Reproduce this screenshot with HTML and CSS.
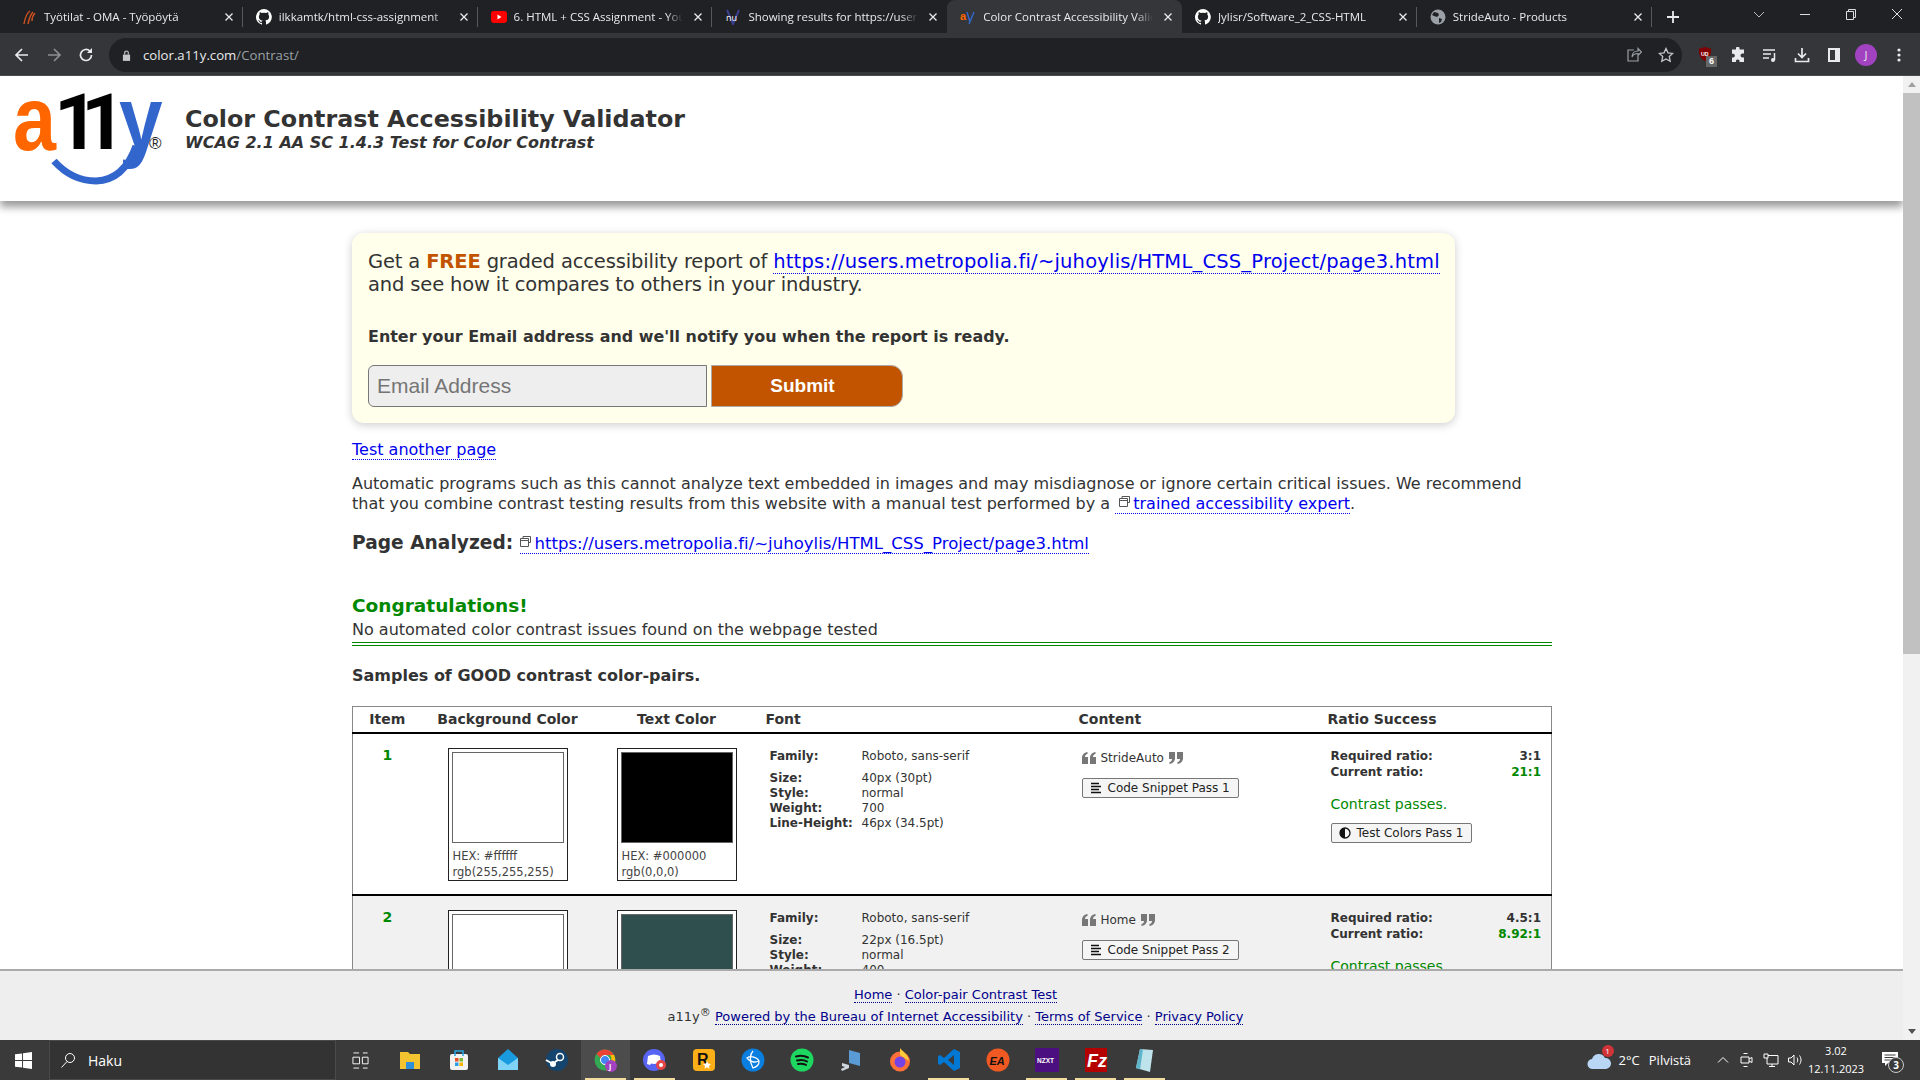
FILE: index.html
```html
<!DOCTYPE html>
<html lang="en">
<head>
    <meta charset="UTF-8">
    <title>Color Contrast Accessibility Validator</title>
    <link rel="stylesheet" href="styles.css">
</head>
<body>
    <svg class="defs" width="0" height="0">
        <symbol id="github" viewBox="0 0 16 16"><path fill="#fff" d="M8 0a8 8 0 0 0-2.5 15.6c.4.1.5-.2.5-.4v-1.4c-2.2.5-2.7-1-2.7-1-.4-.9-.9-1.200-.9-1.200-.7-.5.1-.5.1-.5.8.1 1.200.8 1.200.8.7 1.200 1.900.9 2.300.7.1-.5.300-.9.500-1.100-1.800-.2-3.600-.9-3.600-4 0-.9.300-1.600.8-2.100-.1-.2-.4-1 .1-2.100 0 0 .7-.2 2.200.8a7.600 7.600 0 0 1 4 0c1.500-1 2.200-.8 2.200-.8.4 1.100.2 1.900.1 2.100.5.6.8 1.300.8 2.100 0 3.100-1.900 3.700-3.700 3.900.3.3.6.800.6 1.500v2.200c0 .2.100.5.600.4A8 8 0 0 0 8 0z"/></symbol>
        <symbol id="tab-x" viewBox="0 0 10 10"><path stroke="#e8eaed" stroke-width="1.300" d="M1.500 1.500l7 7M8.500 1.500l-7 7"/></symbol>
        <symbol id="link-box" viewBox="0 0 11 11"><path fill="none" stroke="#555" d="M3 2.500V.5h7.500v6H8.500M.5 2.500h8v8h-8zM.5 4.500h8"/></symbol>
        <symbol id="quote-l" viewBox="0 0 14 12"><path fill="#777" d="M0 6c0-3 2-5.500 5.500-6v2C4 2.300 3 3.300 3 5h3v7H0zM8 6c0-3 2-5.500 5.500-6v2C12 2.300 11 3.300 11 5h3v7H8z"/></symbol>
        <symbol id="quote-r" viewBox="0 0 14 12"><path fill="#777" d="M6 6c0 3-2 5.500-5.500 6v-2C2 9.700 3 8.700 3 7H0V0h6zM14 6c0 3-2 5.500-5.500 6v-2C10 9.700 11 8.700 11 7H8V0h6z"/></symbol>
        <symbol id="lines" viewBox="0 0 12 12"><path stroke="#111" stroke-width="1.500" d="M1 1.500h8M1 4.500h10M1 7.500h8M1 10.500h10"/></symbol>
    </svg>

    <div class="screen">
        <div class="tabstrip">
            <div class="tab">
                <svg class="favicon" viewBox="0 0 16 16"><path fill="none" stroke="#c8501e" stroke-width="1.500" d="M3 15C4 9 6 4 9 2M7 15c1-5 2-9 5-12M11 12c0-3 1-6 3-8"/></svg>
                <span class="tab-title">Työtilat - OMA - Työpöytä</span>
                <svg class="tab-close"><use href="#tab-x"/></svg>
            </div>
            <div class="tab">
                <svg class="favicon"><use href="#github"/></svg>
                <span class="tab-title">ilkkamtk/html-css-assignment</span>
                <svg class="tab-close"><use href="#tab-x"/></svg>
            </div>
            <div class="tab">
                <svg class="favicon" viewBox="0 0 16 16"><rect y="2" width="16" height="12" rx="3" fill="#f00"/><path fill="#fff" d="M6.500 5.500l4 2.500-4 2.500z"/></svg>
                <span class="tab-title">6. HTML + CSS Assignment - YouTube</span>
                <svg class="tab-close"><use href="#tab-x"/></svg>
            </div>
            <div class="tab tab-last-plain">
                <svg class="favicon" viewBox="0 0 16 16"><path fill="none" stroke="#3b3f8f" stroke-width="2" d="M2 1l6 14 6-14"/><text x="1" y="12" class="nu-text">nu</text></svg>
                <span class="tab-title">Showing results for https://users.metropolia</span>
                <svg class="tab-close"><use href="#tab-x"/></svg>
            </div>
            <div class="tab tab-active">
                <svg class="favicon" viewBox="0 0 16 16"><text x="0" y="11" class="fav-a">a</text><path fill="none" stroke="#36c" stroke-width="1.500" d="M7 3l3 10M14 3l-5 12"/></svg>
                <span class="tab-title">Color Contrast Accessibility Validator</span>
                <svg class="tab-close"><use href="#tab-x"/></svg>
            </div>
            <div class="tab">
                <svg class="favicon"><use href="#github"/></svg>
                <span class="tab-title">Jylisr/Software_2_CSS-HTML</span>
                <svg class="tab-close"><use href="#tab-x"/></svg>
            </div>
            <div class="tab">
                <svg class="favicon" viewBox="0 0 16 16"><circle cx="8" cy="8" r="7.500" fill="#9aa0a6"/><path fill="#202124" d="M4 3l4 1 1 2-2 2-3-1-2-1zM9 9l3 1-1 3-2 1z"/></svg>
                <span class="tab-title">StrideAuto - Products</span>
                <svg class="tab-close"><use href="#tab-x"/></svg>
            </div>
            <svg class="new-tab" viewBox="0 0 12 12"><path stroke="#e8eaed" stroke-width="1.800" d="M6 0v12M0 6h12"/></svg>
            <div class="window-controls">
                <svg viewBox="0 0 12 12"><path fill="none" stroke="#bbb" d="M1 4l5 5 5-5"/></svg>
                <svg viewBox="0 0 12 12"><path stroke="#ddd" d="M1 6.500h10"/></svg>
                <svg viewBox="0 0 12 12"><path fill="none" stroke="#ddd" d="M1.500 3.500h7v8h-7zM3.500 3.500v-2h7v8h-2"/></svg>
                <svg viewBox="0 0 12 12"><path stroke="#ddd" d="M1 1l10 10M11 1L1 11"/></svg>
            </div>
        </div>

        <div class="toolbar">
            <svg class="tool-icon" viewBox="0 0 16 16"><path fill="none" stroke="#e8eaed" stroke-width="1.700" d="M14 8H2.500M8 2L2 8l6 6"/></svg>
            <svg class="tool-icon" viewBox="0 0 16 16"><path fill="none" stroke="#8b8e92" stroke-width="1.700" d="M2 8h11.500M8 2l6 6-6 6"/></svg>
            <svg class="tool-icon" viewBox="0 0 16 16"><path fill="none" stroke="#e8eaed" stroke-width="1.700" d="M13.500 8a5.500 5.500 0 1 1-1.600-3.900"/><path fill="#e8eaed" d="M14 1v5H9z"/></svg>
            <div class="omnibox">
                <svg class="lock" viewBox="0 0 10 12"><path fill="#c4c7c9" d="M1 5h8v7H1z"/><path fill="none" stroke="#c4c7c9" stroke-width="1.300" d="M3 5V3a2 2 0 0 1 4 0v2"/></svg>
                <span class="url">color.a11y.com<span class="url-path">/Contrast/</span></span>
                <svg class="omni-icon" viewBox="0 0 16 16"><path fill="none" stroke="#9aa0a6" stroke-width="1.200" d="M8 3H2v11h10V9M6 10c0-4 3-6 6-6V1.500L15.500 5 12 8.500V6.500c-3 0-5 1-6 3.500z"/></svg>
                <svg class="omni-icon" viewBox="0 0 16 16"><path fill="none" stroke="#c4c7c9" stroke-width="1.300" d="M8 1.500l2 4.300 4.700.6-3.400 3.200.9 4.700L8 12l-4.200 2.300.9-4.700L1.300 6.400 6 5.800z"/></svg>
            </div>
            <div class="extensions">
                <span class="ublock">
                    <svg viewBox="0 0 16 16"><path fill="#800000" d="M8 0l7 2c0 6-1 11-7 14C2 13 1 8 1 2z"/><text x="3.500" y="10" class="ub-text">UD</text></svg>
                    <span class="ub-badge">6</span>
                </span>
                <svg class="tool-icon" viewBox="0 0 16 16"><path fill="#e8eaed" d="M6 1a1.800 1.800 0 0 1 3.500 0v1.500H14v4h-1.500a2 2 0 0 0 0 4H14V15H9.500v-1.500a2 2 0 0 0-3.500 0V15H2v-4.500h1.500a2 2 0 0 0 0-3.800H2V2.500h4z"/></svg>
                <svg class="tool-icon" viewBox="0 0 16 16"><path stroke="#e8eaed" stroke-width="1.500" fill="none" d="M1 3h12M1 7h8M1 11h6M12.500 6v7"/><circle cx="11" cy="13" r="2" fill="#e8eaed"/></svg>
                <svg class="tool-icon" viewBox="0 0 16 16"><path stroke="#e8eaed" stroke-width="1.700" fill="none" d="M8 1v9M4 6.500L8 10.500 12 6.500M1.500 11v3.500h13V11"/></svg>
                <svg class="tool-icon" viewBox="0 0 16 16"><path fill="#e8eaed" d="M2 1h12v14H2zM4 3v10h5V3z" fill-rule="evenodd"/></svg>
                <span class="avatar">J</span>
                <svg class="tool-icon" viewBox="0 0 16 16"><g fill="#e8eaed"><circle cx="8" cy="3" r="1.600"/><circle cx="8" cy="8" r="1.600"/><circle cx="8" cy="13" r="1.600"/></g></svg>
            </div>
        </div>

        <div class="viewport">
            <div class="page">
                <div class="page-scroll">
                    <header class="site-header">
                        <svg class="logo" viewBox="0 0 170 124">
                            <text transform="translate(13 74) scale(.86 1)" class="logo-a">a</text>
                            <text x="54" y="73" class="logo-11">1</text>
                            <text x="81" y="73" class="logo-11">1</text>
                            <text transform="translate(119 74) scale(.87 1)" class="logo-y">y</text>
                            <path fill="none" stroke="#36c" stroke-width="7" d="M54 85Q72 105 96 105Q124 104 136 70"/>
                            <text x="149" y="73" class="logo-r">®</text>
                        </svg>
                        <div class="site-titles">
                            <h1>Color Contrast Accessibility Validator</h1>
                            <h2>WCAG 2.1 AA SC 1.4.3 Test for Color Contrast</h2>
                        </div>
                    </header>

                    <main class="content">
                        <section class="report-card">
                            <p class="report-intro">Get a <strong class="free">FREE</strong> graded accessibility report of <a href="#">https://users.metropolia.fi/~juhoylis/HTML_CSS_Project/page3.html</a> and see how it compares to others in your industry.</p>
                            <p class="report-notify">Enter your Email address and we'll notify you when the report is ready.</p>
                            <form class="report-form">
                                <input type="text" class="email" placeholder="Email Address">
                                <button type="button" class="submit">Submit</button>
                            </form>
                        </section>

                        <p class="test-another"><a href="#">Test another page</a></p>
                        <p class="disclaimer">Automatic programs such as this cannot analyze text embedded in images and may misdiagnose or ignore certain critical issues. We recommend that you combine contrast testing results from this website with a manual test performed by a <a href="#"><svg class="ext"><use href="#link-box"/></svg>trained accessibility expert</a>.</p>
                        <p class="analyzed"><strong>Page Analyzed:</strong> <a href="#"><svg class="ext"><use href="#link-box"/></svg>https://users.metropolia.fi/~juhoylis/HTML_CSS_Project/page3.html</a></p>

                        <div class="result">
                            <h3>Congratulations!</h3>
                            <p>No automated color contrast issues found on the webpage tested</p>
                        </div>

                        <h4 class="samples">Samples of GOOD contrast color-pairs.</h4>

                        <table class="pairs">
                            <colgroup>
                                <col class="col-item"><col class="col-bg"><col class="col-text"><col class="col-font"><col class="col-content"><col class="col-ratio">
                            </colgroup>
                            <thead>
                                <tr>
                                    <th>Item</th>
                                    <th>Background Color</th>
                                    <th>Text Color</th>
                                    <th class="th-font">Font</th>
                                    <th class="th-left">Content</th>
                                    <th class="th-left th-ratio">Ratio Success</th>
                                </tr>
                            </thead>
                            <tbody>
                                <tr>
                                    <td class="item-no">1</td>
                                    <td>
                                        <div class="swatch"><div class="swatch-fill fill-white"></div><div class="swatch-label">HEX: #ffffff<br>rgb(255,255,255)</div></div>
                                    </td>
                                    <td>
                                        <div class="swatch"><div class="swatch-fill fill-black"></div><div class="swatch-label">HEX: #000000<br>rgb(0,0,0)</div></div>
                                    </td>
                                    <td class="font-cell">
                                        <dl class="font-info">
                                            <dt class="first">Family:</dt><dd class="first">Roboto, sans-serif</dd>
                                            <dt>Size:</dt><dd>40px (30pt)</dd>
                                            <dt>Style:</dt><dd>normal</dd>
                                            <dt>Weight:</dt><dd>700</dd>
                                            <dt>Line-Height:</dt><dd>46px (34.5pt)</dd>
                                        </dl>
                                    </td>
                                    <td class="content-cell">
                                        <div class="quoted"><svg class="quote"><use href="#quote-l"/></svg><span class="quoted-bold">StrideAuto</span><svg class="quote"><use href="#quote-r"/></svg></div>
                                        <button type="button" class="snippet"><svg class="btn-icon"><use href="#lines"/></svg>Code Snippet Pass 1</button>
                                    </td>
                                    <td class="ratio-cell">
                                        <div class="ratio-row"><b>Required ratio:</b><b>3:1</b></div>
                                        <div class="ratio-row"><b>Current ratio:</b><b class="pass">21:1</b></div>
                                        <p class="passes">Contrast passes.</p>
                                        <button type="button" class="snippet"><svg class="btn-icon" viewBox="0 0 12 12"><circle cx="6" cy="6" r="5" fill="none" stroke="#111" stroke-width="1.300"/><path fill="#111" d="M6 1a5 5 0 0 0 0 10z"/></svg>Test Colors Pass 1</button>
                                    </td>
                                </tr>
                                <tr class="row-alt">
                                    <td class="item-no">2</td>
                                    <td>
                                        <div class="swatch"><div class="swatch-fill fill-white"></div><div class="swatch-label">HEX: #ffffff<br>rgb(255,255,255)</div></div>
                                    </td>
                                    <td>
                                        <div class="swatch"><div class="swatch-fill fill-slate"></div><div class="swatch-label">HEX: #2f4f4f<br>rgb(47,79,79)</div></div>
                                    </td>
                                    <td class="font-cell">
                                        <dl class="font-info">
                                            <dt class="first">Family:</dt><dd class="first">Roboto, sans-serif</dd>
                                            <dt>Size:</dt><dd>22px (16.5pt)</dd>
                                            <dt>Style:</dt><dd>normal</dd>
                                            <dt>Weight:</dt><dd>400</dd>
                                            <dt>Line-Height:</dt><dd>25px (18.8pt)</dd>
                                        </dl>
                                    </td>
                                    <td class="content-cell">
                                        <div class="quoted"><svg class="quote"><use href="#quote-l"/></svg><span>Home</span><svg class="quote"><use href="#quote-r"/></svg></div>
                                        <button type="button" class="snippet"><svg class="btn-icon"><use href="#lines"/></svg>Code Snippet Pass 2</button>
                                    </td>
                                    <td class="ratio-cell">
                                        <div class="ratio-row"><b>Required ratio:</b><b>4.5:1</b></div>
                                        <div class="ratio-row"><b>Current ratio:</b><b class="pass">8.92:1</b></div>
                                        <p class="passes">Contrast passes.</p>
                                        <button type="button" class="snippet"><svg class="btn-icon" viewBox="0 0 12 12"><circle cx="6" cy="6" r="5" fill="none" stroke="#111" stroke-width="1.300"/><path fill="#111" d="M6 1a5 5 0 0 0 0 10z"/></svg>Test Colors Pass 2</button>
                                    </td>
                                </tr>
                            </tbody>
                        </table>
                    </main>
                </div>

                <footer class="site-footer">
                    <p><a href="#">Home</a> · <a href="#">Color-pair Contrast Test</a></p>
                    <p><span class="brand">a11y<sup>®</sup></span> <a href="#">Powered by the Bureau of Internet Accessibility</a> · <a href="#">Terms of Service</a> · <a href="#">Privacy Policy</a></p>
                </footer>
            </div>

            <div class="scrollbar">
                <span class="arrow-up"></span>
                <div class="scroll-track"><div class="scroll-thumb"></div></div>
                <span class="arrow-down"></span>
            </div>
        </div>

        <div class="taskbar">
            <svg class="start" viewBox="0 0 18 18"><path fill="#fff" d="M0 2.500l7.500-1v7H0zM8.500 1.300L18 0v8.500H8.500zM0 9.500h7.500v7L0 15.500zM8.500 9.500H18V18l-9.500-1.300z"/></svg>
            <div class="search">
                <svg viewBox="0 0 16 16"><circle cx="10" cy="6" r="4.500" fill="none" stroke="#fff"/><path stroke="#fff" d="M7 9.500L1.500 15.500"/></svg>
                <span>Haku</span>
            </div>
            <svg class="task-view" viewBox="0 0 18 18"><path fill="none" stroke="#fff" d="M1.500 1h6M1.500 17h6M1 5.500h7v7H1zM11.500 1h5M11.500 17h5M11 5.500h6v7h-6z"/></svg>
            <div class="task-apps">
                <span class="app"><svg viewBox="0 0 24 24"><path fill="#f4c430" d="M2 4h8l2 2h10v15H2z"/><path fill="#2f8fd8" d="M8 14h8v7H8z"/></svg></span>
                <span class="app"><svg viewBox="0 0 24 24"><rect x="3" y="6" width="18" height="16" rx="2" fill="#f2f2f2"/><path fill="none" stroke="#2aa7e8" stroke-width="1.500" d="M8 8V3h8v5"/><path fill="#e8502a" d="M8 10h3.500v3.500H8z"/><path fill="#7cb82f" d="M12.500 10H16v3.500h-3.500z"/><path fill="#2aa0e8" d="M8 14.500h3.500V18H8z"/><path fill="#f4b400" d="M12.500 14.500H16V18h-3.500z"/></svg></span>
                <span class="app"><svg viewBox="0 0 24 24"><path fill="#1a9be0" d="M2 10L12 1l10 9v12H2z"/><path fill="#7fd3f7" d="M2 10l10 7 10-7v12H2z"/></svg></span>
                <span class="app"><svg viewBox="0 0 24 24"><circle cx="12" cy="12" r="11" fill="#14456f"/><circle cx="15" cy="9" r="3.500" fill="none" stroke="#fff" stroke-width="1.500"/><circle cx="8" cy="16" r="3" fill="#fff"/><path stroke="#fff" stroke-width="2" d="M1 12l7 4M10 14l3-2"/></svg></span>
                <span class="app app-chrome"><svg viewBox="0 0 24 24"><circle cx="11" cy="12" r="10.500" fill="#34a853"/><path fill="#ea4335" d="M11 1.500A10.500 10.500 0 0 1 20 7H11a5 5 0 0 0-4.500 3L2.500 6A10.500 10.500 0 0 1 11 1.500z"/><path fill="#fbbc05" d="M20 7a10.500 10.500 0 0 1-8 15.500l4-8.500A5 5 0 0 0 16 7z"/><circle cx="11" cy="12" r="4.500" fill="#4285f4" stroke="#fff"/><circle cx="17" cy="18" r="6" fill="#a142c0"/><text x="15" y="21" class="chrome-j">J</text></svg></span>
                <span class="app app-open"><svg viewBox="0 0 24 24"><circle cx="11" cy="12" r="11" fill="#5865f2"/><path fill="#fff" d="M5 8c4-2 8-2 12 0l1 8-3 1-1-1.500c-2 .6-4 .6-6 0L7 17l-3-1z"/><circle cx="18" cy="17" r="5" fill="#e64545"/><circle cx="18" cy="17" r="2" fill="#fff"/></svg></span>
                <span class="app"><svg viewBox="0 0 24 24"><rect x="1" y="1" width="22" height="22" rx="4" fill="#fcaf17"/><text x="5" y="17" class="rockstar">R</text><path fill="#fff" d="M15 13l1.200 2.600 2.800.3-2 2 .5 2.800-2.500-1.400-2.500 1.400.5-2.800-2-2 2.800-.3z"/></svg></span>
                <span class="app"><svg viewBox="0 0 24 24"><circle cx="12" cy="12" r="11.500" fill="#0a7fe0"/><path fill="none" stroke="#fff" stroke-width="1.300" d="M12 3c-3 3-4 10 0 17 3-1 6-3 6-6 0-4-8-7-12-4 3 4 8 5 12 3"/></svg></span>
                <span class="app"><svg viewBox="0 0 24 24"><circle cx="12" cy="12" r="11.500" fill="#1ed760"/><path fill="none" stroke="#111" stroke-width="2" stroke-linecap="round" d="M6 8.500c4-1 8-1 12 1M7 12.500c3-.8 7-.8 10 1M8 16c2.500-.6 5-.5 8 .8"/></svg></span>
                <span class="app"><svg viewBox="0 0 24 24"><path fill="#5b9bd5" d="M10 2l11 3v13l-11-3z"/><path fill="#cfd8dc" d="M3 15l7 2v3l-7 3-1-2 4-2-3-1z"/></svg></span>
                <span class="app"><svg viewBox="0 0 24 24"><circle cx="12" cy="13.500" r="10" fill="#ff7139"/><path fill="#ffca3a" d="M12 0c2 3 8 6 9 13L12 7z"/><circle cx="12" cy="14" r="5.500" fill="#7542e5"/></svg></span>
                <span class="app app-open"><svg viewBox="0 0 24 24"><path fill="#0078d4" d="M17 1l6 3v16l-6 3-10-9-4 3-2-1V8l2-1 4 3zM17 7l-6 5 6 5z"/></svg></span>
                <span class="app"><svg viewBox="0 0 24 24"><circle cx="12" cy="12" r="11.500" fill="#f05a22"/><text x="3.500" y="16.500" class="ea-text">EA</text></svg></span>
                <span class="app app-open"><svg viewBox="0 0 24 24"><rect width="24" height="24" fill="#4b0f80"/><text x="2" y="14.500" class="nzxt-text">NZXT</text></svg></span>
                <span class="app app-open"><svg viewBox="0 0 24 24"><rect width="22" height="24" x="1" fill="#b50000"/><text x="3" y="19" class="fz-text">Fz</text></svg></span>
                <span class="app app-open"><svg viewBox="0 0 24 24"><path fill="#bfe3ea" d="M7 1l13 1-3 22L3 20z"/><path fill="#5fb4c9" d="M7 1l3 .2L7 21.500 3 20z"/></svg></span>
            </div>
            <div class="tray">
                <span class="weather">
                    <svg viewBox="0 0 24 20"><path fill="#b9d6f5" d="M6 19a5 5 0 0 1-1-10 7 7 0 0 1 13-1 5.500 5.500 0 0 1 1 11z"/></svg>
                    <span class="weather-badge">1</span>
                </span>
                <span class="tray-temp">2°C</span>
                <span class="tray-sky">Pilvistä</span>
                <svg class="tray-chevron" viewBox="0 0 12 12"><path fill="none" stroke="#fff" d="M1 8.500L6 3.500l5 5"/></svg>
                <svg class="tray-icon" viewBox="0 0 16 16"><path fill="none" stroke="#fff" d="M4.500 1.500h4M4.500 14.500h4M2 5h8v6H2zM10 7l3-1.500v5L10 9"/></svg>
                <svg class="tray-icon" viewBox="0 0 16 16"><path fill="none" stroke="#fff" d="M1 2h4v4H1zM5 3.500h10V12H4V6M9 12v2M6 14.500h6"/></svg>
                <svg class="tray-icon tray-volume" viewBox="0 0 16 16"><path fill="none" stroke="#fff" d="M1.500 6H4l3-3v10L4 10H1.500zM10 5.500c1 1.500 1 3.500 0 5M12.500 3.500c2 3 2 6 0 9"/></svg>
                <div class="clock"><span>3.02</span><span>12.11.2023</span></div>
                <span class="notify">
                    <svg viewBox="0 0 18 18"><path fill="#fff" d="M1 1h16v11H7l-3 3v-3H1z"/><path stroke="#3a3a3a" d="M3.500 4h11M3.500 6.500h11M3.500 9h8"/></svg>
                    <span class="notify-count">3</span>
                </span>
            </div>
        </div>
    </div>
</body>
</html>
```

FILE: styles.css
```css
* {
    box-sizing: border-box;
}
html, body {
    margin: 0;
    height: 100%;
    overflow: hidden;
}
body {
    font-family: "DejaVu Sans", sans-serif;
    color: #333;
    background: #fff;
}
p, h1, h2, h3, h4, dl, dd {
    margin: 0;
}
a {
    color: #0000ee;
    text-decoration: none;
    border-bottom: 1px dotted #0000ee;
}
.defs {
    position: absolute;
}
.screen {
    width: 1920px;
    height: 1080px;
    display: flex;
    flex-direction: column;
}

/* browser chrome */
.tabstrip {
    height: 33px;
    background: #202124;
    padding-left: 8px;
    display: flex;
    align-items: center;
    font-family: "Open Sans", sans-serif;
    font-size: 11.500px;
    color: #e8eaed;
}
.tab {
    width: 234.800px;
    height: 33px;
    padding: 0 9px 0 13px;
    display: flex;
    align-items: center;
    position: relative;
}
.tab::after {
    content: "";
    position: absolute;
    right: 0;
    top: 7px;
    height: 20px;
    border-right: 1px solid #55585c;
}
.tab-last-plain::after, .tab-active::after {
    display: none;
}
.tab-active {
    background: #35363a;
    border-radius: 8px 8px 0 0;
}
.favicon {
    width: 16px;
    height: 16px;
    flex: none;
}
.tab-title {
    flex: 1;
    margin-left: 7px;
    white-space: nowrap;
    overflow: hidden;
    -webkit-mask-image: linear-gradient(to right, #000 90%, transparent);
    mask-image: linear-gradient(to right, #000 90%, transparent);
}
.tab-close {
    width: 10px;
    height: 10px;
    flex: none;
    margin-left: 10px;
}
.nu-text {
    font: 9px "Open Sans", sans-serif;
    fill: #fff;
}
.fav-a {
    font: bold 11px "Liberation Sans", sans-serif;
    fill: #f60;
}
.new-tab {
    width: 12px;
    height: 12px;
    margin-left: 15px;
}
.window-controls {
    margin-left: auto;
    display: flex;
    gap: 34px;
    padding-right: 17px;
    margin-top: -6px;
}
.window-controls svg {
    width: 12px;
    height: 12px;
}
.toolbar {
    height: 43px;
    padding-top: 2px;
    background: #35363a;
    border-bottom: 1px solid #4a4b4f;
    display: flex;
    align-items: center;
    padding-left: 14px;
}
.tool-icon {
    width: 16px;
    height: 16px;
    flex: none;
    margin-right: 16px;
}
.omnibox {
    flex: none;
    width: 1573px;
    height: 34px;
    margin-left: -1px;
    border-radius: 17px;
    background: #202124;
    display: flex;
    align-items: center;
    padding: 0 8px 0 13px;
    font-family: "Open Sans", sans-serif;
    font-size: 13.200px;
}
.lock {
    width: 9px;
    height: 11px;
    margin-right: 12px;
}
.url {
    color: #e8eaed;
    flex: 1;
}
.url-path {
    color: #9aa0a6;
}
.omni-icon {
    width: 16px;
    height: 16px;
    margin-left: 16px;
}
.extensions {
    display: flex;
    align-items: center;
    padding-left: 16px;
}
.ublock {
    position: relative;
    width: 16px;
    height: 18px;
    margin-right: 16px;
}
.ublock svg {
    width: 14px;
    height: 16px;
}
.ub-text {
    font: bold 6px "Liberation Sans", sans-serif;
    fill: #fff;
}
.ub-badge {
    position: absolute;
    left: 8px;
    top: 10px;
    background: #666;
    color: #fff;
    font: bold 9px "Liberation Sans", sans-serif;
    padding: 0 3px;
    line-height: 11px;
}
.avatar {
    width: 22px;
    height: 22px;
    border-radius: 50%;
    background: #a142c0;
    color: #e8eaed;
    font: 11px/22px "Open Sans", sans-serif;
    text-align: center;
    margin-left: -3px;
    margin-right: 14px;
}

/* page */
.viewport {
    flex: 1;
    display: flex;
    min-height: 0;
}
.page {
    flex: 1;
    min-width: 0;
    display: flex;
    flex-direction: column;
}
.page-scroll {
    flex: 1;
    min-height: 0;
    overflow: hidden;
}
.site-header {
    height: 125px;
    display: flex;
    box-shadow: 0 6px 8px rgba(0, 0, 0, 0.4);
    position: relative;
}
.logo {
    width: 170px;
    height: 124px;
    flex: none;
}
.logo-a, .logo-y, .logo-r {
    font-family: "Liberation Sans", sans-serif;
}
.logo-11 {
    font-family: Roboto, sans-serif;
}
.logo-a {
    font-size: 90px;
    font-weight: bold;
    fill: #f60;
}
.logo-y {
    font-size: 90px;
    font-weight: bold;
    fill: #36c;
}
.logo-11 {
    font-size: 78px;
    font-weight: bold;
    fill: #000;
}
.logo-r {
    font-size: 17px;
    fill: #222;
}
.site-titles {
    padding: 28px 0 0 15px;
}
h1 {
    font-size: 23.800px;
    line-height: 30px;
    font-weight: bold;
    color: #333;
}
h2 {
    font-size: 16px;
    line-height: 18px;
    font-style: italic;
    font-weight: bold;
    color: #333;
}
.content {
    width: 1200px;
    margin-left: 352px;
    padding-top: 32px;
}
.report-card {
    width: 1103px;
    height: 190px;
    padding: 17px 4px 0 16px;
    background: #ffffeb;
    border-radius: 12px;
    box-shadow: 0 2px 10px rgba(0, 0, 0, 0.2);
}
.report-intro {
    font-size: 19.500px;
    line-height: 23px;
    letter-spacing: -0.15px;
}
.report-intro a {
    letter-spacing: 0.2px;
}
.free {
    color: #c25400;
}
.report-notify {
    margin-top: 30px;
    font-size: 15.950px;
    font-weight: bold;
    line-height: 22px;
}
.report-form {
    display: flex;
    margin-top: 17px;
    gap: 4px;
}
.email {
    width: 339px;
    height: 42px;
    padding: 0 8px;
    background: #eee;
    border: 1px solid #777;
    border-radius: 6px 0 0 6px;
    font: 21px "Liberation Sans", sans-serif;
}
.email::placeholder {
    color: #757575;
}
.submit {
    width: 192px;
    height: 42px;
    padding: 0 9px 0 0;
    background: #c25400;
    border: 1px solid #aaa;
    border-radius: 0 12px 12px 0;
    color: #fff;
    font: bold 19px "Liberation Sans", sans-serif;
}
.test-another {
    margin-top: 16px;
    font-size: 16px;
    line-height: 21px;
}
.disclaimer {
    margin-top: 14px;
    font-size: 16px;
    line-height: 20px;
    width: 1190px;
}
.disclaimer .ext {
    margin-left: 4px;
}
.ext {
    width: 11px;
    height: 11px;
    margin-right: 3px;
    vertical-align: 2px;
}
.analyzed {
    margin-top: 16px;
    font-size: 16.500px;
    line-height: 26px;
    word-spacing: 2px;
    letter-spacing: 0.02px;
}
.analyzed strong {
    font-size: 18.600px;
    word-spacing: 0;
}
.result {
    margin-top: 37px;
    border-bottom: 4px double #080;
    padding-bottom: 2px;
}
.result h3 {
    font-size: 18.500px;
    line-height: 24px;
    color: #080;
}
.result p {
    font-size: 16px;
    line-height: 20px;
    padding-top: 2px;
}
.samples {
    margin-top: 20px;
    font-size: 16px;
    line-height: 20px;
}
.pairs {
    margin-top: 20px;
    width: 1199px;
    table-layout: fixed;
    border-collapse: collapse;
    border: 1px solid #888;
    font-size: 12px;
}
.col-item { width: 69px; }
.col-bg { width: 172px; }
.col-text { width: 166px; }
.col-font { width: 318px; }
.col-content { width: 248px; }
.col-ratio { width: 226px; }
.pairs th {
    height: 26px;
    padding: 0;
    font-size: 14px;
    border-bottom: 2px solid #000;
}
.pairs .th-font {
    text-align: left;
    padding-left: 6px;
}
.pairs .th-left {
    text-align: left;
    padding-left: 1px;
}
.pairs .th-ratio {
    padding-left: 2px;
}
.pairs td {
    padding: 14px 0 13px;
    vertical-align: top;
    border-bottom: 2px solid #000;
}
.row-alt {
    background: #f1f1f1;
}
.pairs .item-no {
    color: #080;
    font-size: 14px;
    font-weight: bold;
    text-align: center;
    padding-top: 13px;
}
.swatch {
    width: 120px;
    height: 133px;
    margin: 0 auto;
    padding: 3px 3px 0;
    border: 1px solid #222;
    background: #fff;
}
.swatch-fill {
    height: 91px;
    border: 1px solid #666;
}
.fill-white { background: #fff; }
.fill-black { background: #000; }
.fill-slate { background: #2f4f4f; }
.swatch-label {
    margin-top: 5px;
    padding-left: 1px;
    font-size: 11.500px;
    line-height: 16px;
    white-space: nowrap;
    color: #444;
}
.pairs .font-cell {
    padding-left: 10px;
}
.font-info {
    display: grid;
    grid-template-columns: 92px 1fr;
    line-height: 15px;
    font-size: 12px;
    margin-top: 1px;
}
.font-info dt {
    font-weight: bold;
}
.font-info .first {
    margin-bottom: 7px;
}
.pairs .content-cell {
    padding-left: 4px;
}
.quoted {
    display: flex;
    align-items: center;
    gap: 5px;
    font-size: 12px;
    height: 16px;
    margin-top: 2px;
}
.quoted-bold {
    font-weight: 500;
}
.quote {
    width: 14px;
    height: 12px;
}
.snippet {
    display: flex;
    align-items: center;
    gap: 6px;
    height: 20px;
    margin-top: 12px;
    padding: 0 8px 0 7px;
    background: #f5f5f5;
    border: 1px solid #777;
    border-radius: 2px;
    font: 12px "DejaVu Sans", sans-serif;
    color: #222;
    white-space: nowrap;
}
.btn-icon {
    width: 12px;
    height: 12px;
}
.pairs .ratio-cell {
    padding: 14px 10px 0 5px;
}
.ratio-row {
    display: flex;
    justify-content: space-between;
    line-height: 16.500px;
    font-size: 12px;
}
.pass {
    color: #080;
}
.passes {
    margin-top: 14px;
    color: #080;
    font-size: 14px;
    line-height: 18px;
}
.ratio-cell .snippet {
    margin-top: 10px;
}
.site-footer {
    height: 71px;
    flex: none;
    padding: 13px 0 0 8px;
    background: #eee;
    border-top: 2px solid #aaa;
    text-align: center;
    font-size: 13px;
    line-height: 22px;
    color: #333;
    position: relative;
}
.site-footer a {
    color: #00008b;
    border-bottom-color: #00008b;
}
.brand sup {
    line-height: 0;
    font-size: 11px;
}
.scrollbar {
    width: 17px;
    flex: none;
    display: flex;
    flex-direction: column;
    background: #f1f1f1;
}
.arrow-up, .arrow-down {
    height: 17px;
    flex: none;
    display: flex;
    align-items: center;
    justify-content: center;
}
.arrow-up::before {
    content: "";
    border: 4px solid transparent;
    border-top: 0;
    border-bottom: 5px solid #a0a0a0;
}
.arrow-down::before {
    content: "";
    border: 4px solid transparent;
    border-bottom: 0;
    border-top: 5px solid #505050;
}
.scroll-track {
    flex: 1;
}
.scroll-thumb {
    height: 561px;
    background: #c1c1c1;
}

/* windows taskbar */
.taskbar {
    height: 40px;
    background: #3a3a3a;
    display: flex;
    align-items: center;
    color: #fff;
    font-family: "Open Sans", sans-serif;
    font-size: 13px;
}
.start {
    width: 17px;
    height: 17px;
    margin-left: 15px;
    flex: none;
}
.search {
    width: 287px;
    height: 40px;
    margin-left: 17px;
    padding-left: 10px;
    background: #333;
    border: 1px solid #4a4a4a;
    display: flex;
    align-items: center;
    gap: 12px;
    font-size: 14px;
}
.search svg {
    width: 16px;
    height: 16px;
}
.task-view {
    width: 17px;
    height: 17px;
    margin-left: 16px;
}
.task-apps {
    display: flex;
    margin-left: 16px;
}
.app {
    width: 49px;
    height: 40px;
    display: flex;
    align-items: center;
    justify-content: center;
    position: relative;
}
.app svg {
    width: 24px;
    height: 24px;
}
.app-chrome {
    background: #4c4c4c;
}
.app-chrome::after, .app-open::after {
    content: "";
    position: absolute;
    left: 4px;
    right: 4px;
    bottom: 0;
    height: 2px;
    background: #f3dca0;
}
.chrome-j {
    font: bold 7px "Open Sans", sans-serif;
    fill: #fff;
}
.rockstar {
    font: bold 16px "Liberation Sans", sans-serif;
    fill: #111;
}
.ea-text {
    font: bold italic 11px "Liberation Sans", sans-serif;
    fill: #111;
}
.nzxt-text {
    font: bold 6.500px "Liberation Sans", sans-serif;
    fill: #fff;
}
.fz-text {
    font: bold italic 18px "Liberation Sans", sans-serif;
    fill: #fff;
}
.tray {
    margin-left: auto;
    display: flex;
    align-items: center;
    padding-right: 21px;
}
.weather {
    position: relative;
    width: 24px;
    height: 20px;
}
.weather svg {
    width: 24px;
    height: 20px;
}
.weather-badge {
    position: absolute;
    right: -3px;
    top: -5px;
    width: 12px;
    height: 12px;
    border-radius: 50%;
    background: #d13438;
    font-size: 8px;
    line-height: 12px;
    text-align: center;
}
.tray-temp {
    margin-left: 8px;
}
.tray-sky {
    margin-left: 9px;
}
.tray-chevron {
    width: 12px;
    height: 12px;
    margin: 0 10px 0 26px;
}
.tray-icon {
    width: 16px;
    height: 16px;
    margin-right: 8px;
}
.tray-volume {
    margin-right: 6px;
}
.clock {
    display: flex;
    flex-direction: column;
    align-items: center;
    width: 54px;
    font-size: 11px;
    line-height: 18px;
}
.notify {
    position: relative;
    width: 18px;
    height: 18px;
    margin-left: 18px;
}
.notify svg {
    width: 18px;
    height: 18px;
}
.notify-count {
    position: absolute;
    left: 7px;
    top: 6px;
    width: 16px;
    height: 16px;
    border: 1px solid #ccc;
    border-radius: 50%;
    background: #3a3a3a;
    font-size: 10px;
    font-weight: bold;
    line-height: 14px;
    text-align: center;
}
```
